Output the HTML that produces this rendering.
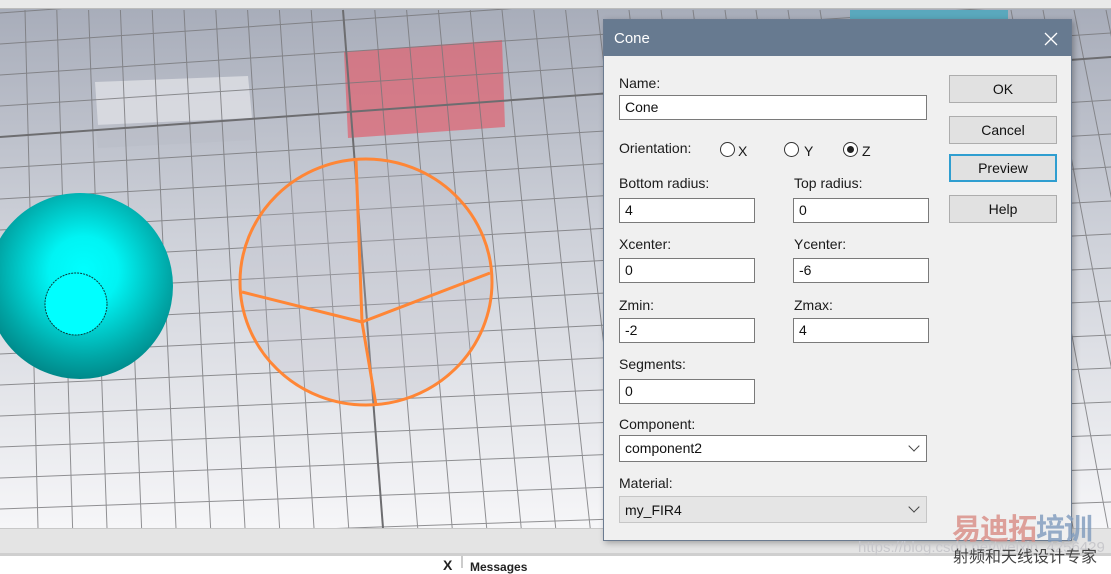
<!DOCTYPE html>
<html><head><meta charset="utf-8"><style>
*{margin:0;padding:0;box-sizing:border-box}
body{width:1111px;height:568px;overflow:hidden;position:relative;background:#fff;font-family:"Liberation Sans","Noto Sans CJK SC",sans-serif}
.abs{position:absolute}
#dlg{left:603px;top:19px;width:469px;height:522px;background:#f0f0f0;border:1px solid #6b7b90;box-shadow:2px 2px 6px rgba(0,0,0,.3)}
#tb{left:0;top:0;width:100%;height:36px;background:#677a90;color:#fff;font-size:15px}
.lbl{font-size:14px;color:#1a1a1a}
.inp{background:#fff;border:1px solid #7a7a7a;height:25px;font-size:14px;padding:3px 0 0 5px;color:#111}
.btn{left:345px;width:108px;height:28px;background:#e1e1e1;border:1px solid #adadad;font-size:14px;text-align:center;line-height:26px;color:#111}
.rad{width:15px;height:15px;border:1px solid #333;border-radius:50%;background:#fff}
.chev{right:8px;top:6px;width:8px;height:8px;border-right:1.3px solid #444;border-bottom:1.3px solid #444;transform:rotate(45deg)}
</style></head><body>
<div class="abs" style="left:0;top:0;width:1111px;height:9px;background:#e9e9e9;border-bottom:1px solid #bbb"></div>
<svg class="abs" style="left:0;top:9px" width="1111" height="519" viewBox="0 9 1111 519">
<defs><linearGradient id="bg" x1="0" y1="0" x2="0" y2="1"><stop offset="0" stop-color="#a8adba"/><stop offset=".45" stop-color="#cfd2da"/><stop offset="1" stop-color="#f6f6f8"/></linearGradient>
<radialGradient id="sp" cx="0.52" cy="0.42" r="0.62"><stop offset="0" stop-color="#00ffff"/><stop offset=".3" stop-color="#00f4f4"/><stop offset=".75" stop-color="#00a6a6"/><stop offset="1" stop-color="#007f80"/></radialGradient></defs>
<rect x="0" y="9" width="1111" height="519" fill="url(#bg)"/>
<polygon points="95,82 248,76 252,118 98,125" fill="#dfe0e5" opacity=".8"/>
<polygon points="95,125 252,118 254,140 98,148" fill="#b9bcc6" opacity=".6"/>
<polygon points="344,52 502,40 505,127 348,138" fill="#e0606e" opacity=".7"/>
<g stroke="#77777a" stroke-width="1" opacity=".8">
<line x1="25" y1="10" x2="38" y2="528"/><line x1="56.8" y1="10" x2="72.6" y2="528"/><line x1="88.6" y1="10" x2="107" y2="528"/><line x1="120.4" y1="10" x2="141.6" y2="528"/><line x1="152.2" y1="10" x2="176" y2="528"/><line x1="184" y1="10" x2="210.6" y2="528"/><line x1="215.8" y1="10" x2="245" y2="528"/><line x1="247.6" y1="10" x2="279.6" y2="528"/><line x1="279.4" y1="10" x2="314" y2="528"/><line x1="311.2" y1="10" x2="348.7" y2="528"/><line x1="374.8" y1="10" x2="417.7" y2="528"/><line x1="406.6" y1="10" x2="452.2" y2="528"/><line x1="438.4" y1="10" x2="486.7" y2="528"/><line x1="470.2" y1="10" x2="521.2" y2="528"/><line x1="502" y1="10" x2="555.7" y2="528"/><line x1="533.8" y1="10" x2="590.2" y2="528"/><line x1="565.6" y1="10" x2="624.7" y2="528"/><line x1="597.4" y1="10" x2="659" y2="528"/><line x1="629" y1="10" x2="693" y2="528"/><line x1="661" y1="10" x2="728" y2="528"/><line x1="693" y1="10" x2="763" y2="528"/><line x1="725" y1="10" x2="797" y2="528"/><line x1="756" y1="10" x2="832" y2="528"/><line x1="788" y1="10" x2="866" y2="528"/><line x1="820" y1="10" x2="901" y2="528"/><line x1="852" y1="10" x2="935" y2="528"/><line x1="884" y1="10" x2="970" y2="528"/><line x1="915" y1="10" x2="1004" y2="528"/><line x1="947" y1="10" x2="1039" y2="528"/><line x1="979" y1="10" x2="1073" y2="528"/><line x1="1011" y1="10" x2="1108" y2="528"/><line x1="1043" y1="10" x2="1142" y2="528"/><line x1="1074" y1="10" x2="1177" y2="528"/><line x1="1106" y1="10" x2="1211" y2="528"/>
<line x1="0" y1="13" x2="1111" y2="-67"/><line x1="0" y1="44" x2="1111" y2="-33"/><line x1="0" y1="75" x2="1111" y2="0"/><line x1="0" y1="106" x2="1111" y2="33"/><line x1="0" y1="168" x2="1111" y2="100"/><line x1="0" y1="199" x2="1111" y2="134"/><line x1="0" y1="230" x2="1111" y2="167"/><line x1="0" y1="261" x2="1111" y2="201"/><line x1="0" y1="292" x2="1111" y2="234"/><line x1="0" y1="323" x2="1111" y2="268"/><line x1="0" y1="354" x2="1111" y2="301"/><line x1="0" y1="385" x2="1111" y2="335"/><line x1="0" y1="416" x2="1111" y2="368"/><line x1="0" y1="447" x2="1111" y2="402"/><line x1="0" y1="478" x2="1111" y2="435"/><line x1="0" y1="509" x2="1111" y2="469"/><line x1="0" y1="540" x2="1111" y2="502"/>
</g>
<g stroke="#6d6d70" stroke-width="2"><line x1="343" y1="10" x2="383" y2="528"/><line x1="0" y1="137" x2="1111" y2="57"/></g>
<rect x="850" y="10" width="158" height="10" fill="#5aa8bd"/>
<circle cx="80" cy="286" r="93" fill="url(#sp)"/>
<circle cx="76" cy="304" r="31" fill="#00ffff" stroke="#0b3b3b" stroke-width="1" stroke-dasharray="2 1"/>
<ellipse cx="366" cy="282" rx="126" ry="123" fill="#b9b9c4" fill-opacity=".25" stroke="#ff8636" stroke-width="3"/>
<g stroke="#ff8636" stroke-width="3"><line x1="362" y1="322" x2="356" y2="160"/><line x1="362" y1="322" x2="242" y2="292"/><line x1="362" y1="322" x2="490" y2="273"/><line x1="362" y1="322" x2="376" y2="405"/></g>
</svg>
<div class="abs" style="left:0;top:528px;width:1111px;height:25px;background:#e4e4e4;border-top:1px solid #c8c8c8"></div>
<div class="abs" style="left:0;top:553px;width:1111px;height:3px;background:#cfcfcf"></div>
<div class="abs" style="left:443px;top:557px;font-size:14px;font-weight:bold;color:#222">X</div>
<div class="abs" style="left:461px;top:556px;width:2px;height:12px;background:#ccc"></div>
<div class="abs" style="left:470px;top:560px;font-size:12px;font-weight:bold;color:#222">Messages</div>

<div id="dlg" class="abs">
<div id="tb" class="abs"><span class="abs" style="left:10px;top:10px">Cone</span>
<svg class="abs" style="left:440px;top:12px" width="14" height="14"><path d="M1 1L13 13M13 1L1 13" stroke="#fff" stroke-width="1.3"/></svg></div>
<div class="abs lbl" style="left:15px;top:55px">Name:</div>
<div class="abs inp" style="left:15px;top:75px;width:308px">Cone</div>
<div class="abs lbl" style="left:15px;top:120px">Orientation:</div>
<div class="abs rad" style="left:116px;top:122px"></div><div class="abs lbl" style="left:134px;top:123px">X</div>
<div class="abs rad" style="left:180px;top:122px"></div><div class="abs lbl" style="left:200px;top:123px">Y</div>
<div class="abs rad" style="left:239px;top:122px"><div class="abs" style="left:3px;top:3px;width:7px;height:7px;border-radius:50%;background:#222"></div></div><div class="abs lbl" style="left:258px;top:123px">Z</div>
<div class="abs lbl" style="left:15px;top:155px">Bottom radius:</div>
<div class="abs lbl" style="left:190px;top:155px">Top radius:</div>
<div class="abs inp" style="left:15px;top:178px;width:136px">4</div>
<div class="abs inp" style="left:189px;top:178px;width:136px">0</div>
<div class="abs lbl" style="left:15px;top:216px">Xcenter:</div>
<div class="abs lbl" style="left:190px;top:216px">Ycenter:</div>
<div class="abs inp" style="left:15px;top:238px;width:136px">0</div>
<div class="abs inp" style="left:189px;top:238px;width:136px">-6</div>
<div class="abs lbl" style="left:15px;top:277px">Zmin:</div>
<div class="abs lbl" style="left:190px;top:277px">Zmax:</div>
<div class="abs inp" style="left:15px;top:298px;width:136px">-2</div>
<div class="abs inp" style="left:189px;top:298px;width:136px">4</div>
<div class="abs lbl" style="left:15px;top:336px">Segments:</div>
<div class="abs inp" style="left:15px;top:359px;width:136px">0</div>
<div class="abs lbl" style="left:15px;top:396px">Component:</div>
<div class="abs inp" style="left:15px;top:415px;width:308px;height:27px;padding-top:4px">component2<div class="abs chev"></div></div>
<div class="abs lbl" style="left:15px;top:455px">Material:</div>
<div class="abs inp" style="left:15px;top:476px;width:308px;height:27px;padding-top:5px;background:#e5e5e5;border-color:#c6c6c6">my_FIR4<div class="abs chev"></div></div>
<div class="abs btn" style="top:55px">OK</div>
<div class="abs btn" style="top:96px">Cancel</div>
<div class="abs btn" style="top:134px;border:2px solid #2f9ed0;line-height:24px">Preview</div>
<div class="abs btn" style="top:175px">Help</div>
</div>
<div class="abs" style="left:858px;top:539px;font-size:15px;color:#c8c8cc">https://blog.csdn.net/weixin_4256429</div>
<div class="abs" style="left:952px;top:506px;font-size:29px;font-weight:bold;color:#d98b84;opacity:.8;letter-spacing:-1px">易迪拓<span style="color:#7f9bbd">培训</span></div>
<div class="abs" style="left:953px;top:543px;font-size:16px;color:#444">射频和天线设计专家</div>
</body></html>
